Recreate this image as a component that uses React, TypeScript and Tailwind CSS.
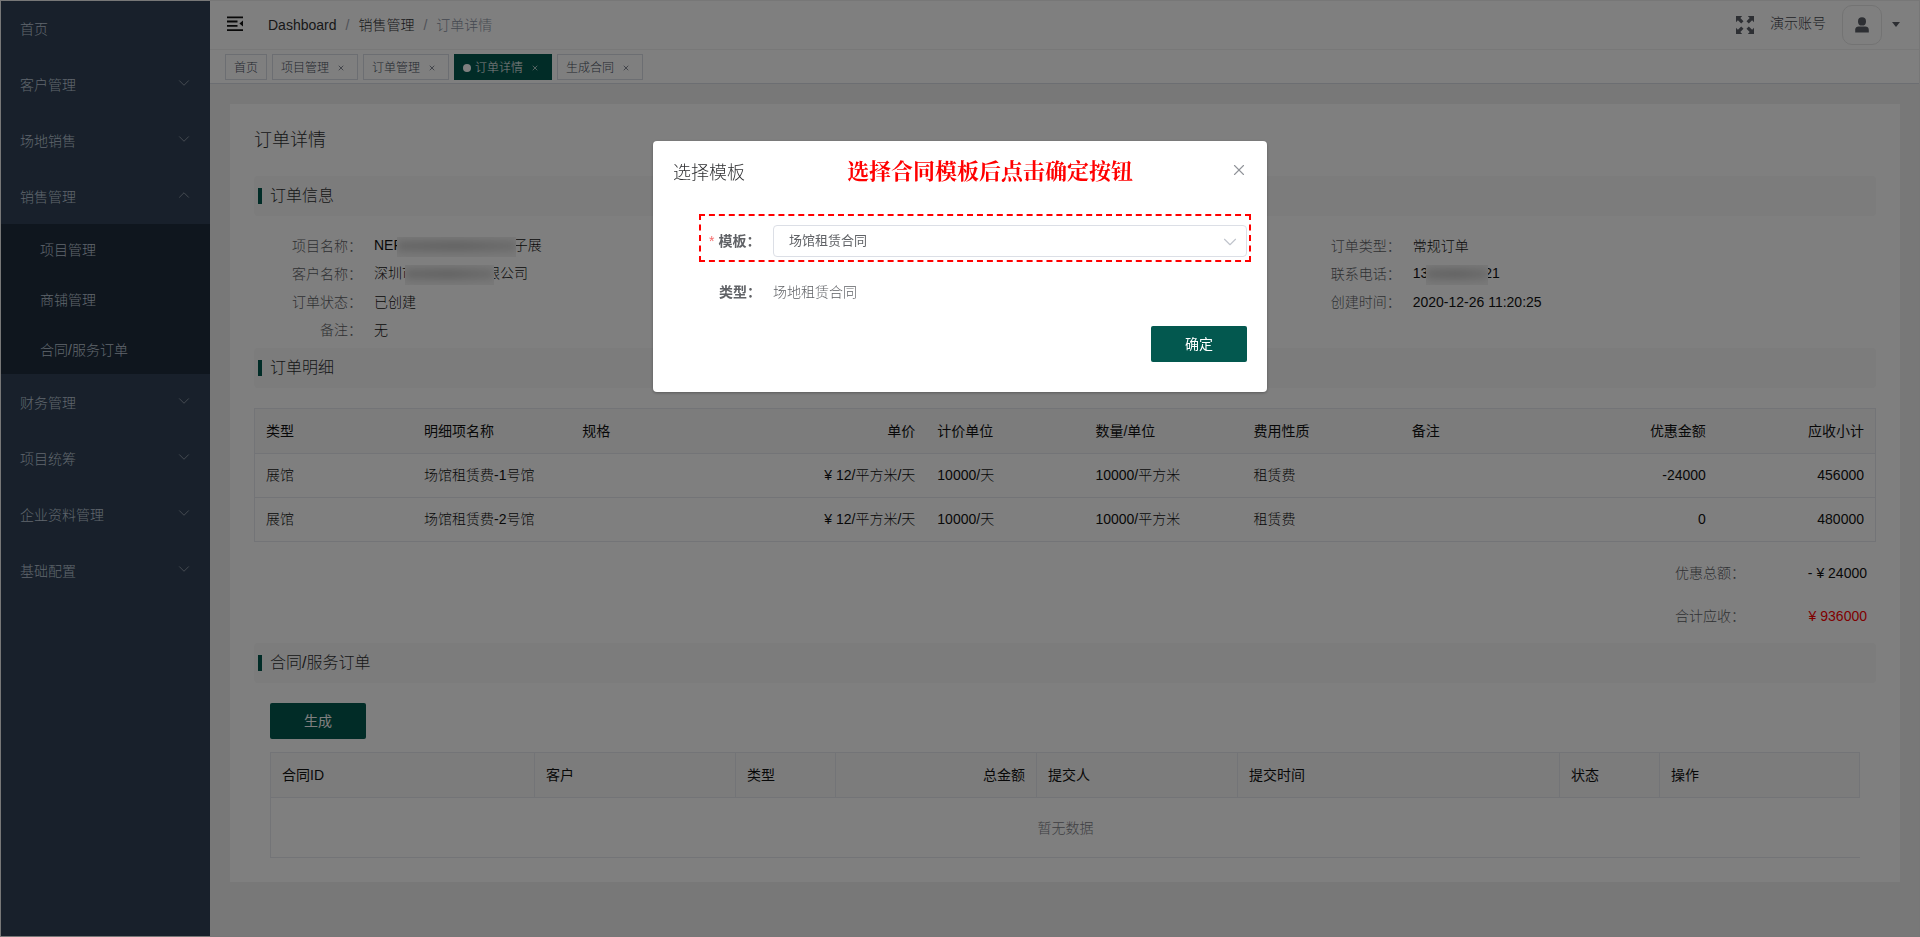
import { useState } from "react";
import type { ReactNode } from "react";
import clsx from "clsx";
import { ChevronDown, ChevronUp, X } from "lucide-react";

interface MenuItem {
  name: string;
  children?: string[];
  leaf?: boolean;
}

interface Tag {
  name: string;
  closable: boolean;
}

interface Column {
  title: string;
  width?: string;
  right?: boolean;
}

const menu: MenuItem[] = [
  { name: "首页", leaf: true },
  { name: "客户管理" },
  { name: "场地销售" },
  { name: "销售管理", children: ["项目管理", "商铺管理", "合同/服务订单"] },
  { name: "财务管理" },
  { name: "项目统筹" },
  { name: "企业资料管理" },
  { name: "基础配置" },
];

const tags: Tag[] = [
  { name: "首页", closable: false },
  { name: "项目管理", closable: true },
  { name: "订单管理", closable: true },
  { name: "订单详情", closable: true },
  { name: "生成合同", closable: true },
];

const detailColumns: Column[] = [
  { title: "类型" },
  { title: "明细项名称" },
  { title: "规格" },
  { title: "单价", width: "w-[197px]", right: true },
  { title: "计价单位" },
  { title: "数量/单位" },
  { title: "费用性质" },
  { title: "备注" },
  { title: "优惠金额", right: true },
  { title: "应收小计", right: true },
];

const detailRows = [
  ["展馆", "场馆租赁费-1号馆", "", "¥ 12/平方米/天", "10000/天", "10000/平方米", "租赁费", "", "-24000", "456000"],
  ["展馆", "场馆租赁费-2号馆", "", "¥ 12/平方米/天", "10000/天", "10000/平方米", "租赁费", "", "0", "480000"],
];

const contractColumns: Column[] = [
  { title: "合同ID" },
  { title: "客户", width: "w-[201px]" },
  { title: "类型", width: "w-[100px]" },
  { title: "总金额", width: "w-[201px]", right: true },
  { title: "提交人", width: "w-[201px]" },
  { title: "提交时间", width: "w-[322px]" },
  { title: "状态", width: "w-[100px]" },
  { title: "操作", width: "w-[200px]" },
];

function FoldIcon() {
  return (
    <svg className="h-4 w-4" viewBox="0 0 16 16" fill="#111" aria-hidden="true">
      <path d="M0 0.5h16v1.8H0zM0 4.6h10.5v1.8H0zM0 8.9h10.5v1.8H0zM0 13.2h16V15H0zM16 4.6v6L12.4 7.6z" />
    </svg>
  );
}

function FullscreenIcon() {
  return (
    <svg className="h-[18px] w-[18px]" viewBox="0 0 18 18" fill="#5a5e66" aria-hidden="true">
      {[0, 90, 180, 270].map((angle) => (
        <path
          key={angle}
          transform={`rotate(${angle} 9 9)`}
          d="M0 0h6.2L4.3 1.9l3.2 3.3-2.3 2.3-3.3-3.2L0 6.2z"
        />
      ))}
    </svg>
  );
}

function UserIcon() {
  return (
    <svg className="h-4 w-4" viewBox="0 0 16 16" fill="#5a5e66" aria-hidden="true">
      <ellipse cx="8" cy="4.4" rx="4" ry="4.2" />
      <path d="M1.2 15.4v-2.6c0-2 1.6-3.2 3.4-3.2h6.8c1.8 0 3.4 1.2 3.4 3.2v2.6z" />
    </svg>
  );
}

// hides the private part of a value behind a smudge
function Masked({ className }: { className: string }) {
  return (
    <span
      className={clsx(
        "relative inline-block h-5 overflow-hidden bg-[#f4f4f4] align-middle",
        className
      )}
    >
      <span className="absolute inset-x-0 top-1 h-2.5 bg-linear-to-r from-[#cacaca] via-[#c0c0c0] to-[#d4d4d4] blur-[4px]" />
    </span>
  );
}

function Field({ label, children }: { label: string; children: ReactNode }) {
  return (
    <div className="flex h-7 items-center">
      <dt className="w-[89px] pr-3 text-right text-[#606266]">{label}：</dt>
      <dd className="whitespace-nowrap text-[#111]">{children}</dd>
    </div>
  );
}

function SectionTitle({ children }: { children: ReactNode }) {
  return (
    <h2 className="flex h-10 items-center gap-2 rounded bg-[#f8f8f8] pl-1 text-base font-light text-[#303133]">
      <span className="h-4 w-1 bg-[#03584f]" />
      {children}
    </h2>
  );
}

function Sidebar() {
  return (
    <nav className="w-[210px] shrink-0 bg-[#304156] text-sm text-[#bfcbd9]">
      <ul>
        {menu.map((item) => (
          <li key={item.name}>
            {item.leaf ? (
              <a href="#" className="flex h-14 items-center px-5 pt-0.5">
                {item.name}
              </a>
            ) : (
              <button
                type="button"
                className="flex h-14 w-full items-center justify-between pl-5 pr-[17px] pt-0.5"
              >
                {item.name}
                <span className="pb-1 text-[#8e99a6]">
                  {item.children ? (
                    <ChevronUp size={18} strokeWidth={1.25} />
                  ) : (
                    <ChevronDown size={18} strokeWidth={1.25} />
                  )}
                </span>
              </button>
            )}
            {item.children && (
              <ul className="bg-[#1f2d3d]">
                {item.children.map((child) => (
                  <li key={child}>
                    <a href="#" className="flex h-[50px] items-center px-10 pt-0.5">
                      {child}
                    </a>
                  </li>
                ))}
              </ul>
            )}
          </li>
        ))}
      </ul>
    </nav>
  );
}

function Navbar() {
  return (
    <header className="flex h-[50px] items-center justify-between border-b border-[#f0f0f0] pl-[17px] pr-5 text-sm">
      <div className="flex items-center">
        <button type="button" aria-label="收起菜单" className="pb-0.5">
          <FoldIcon />
        </button>
        <ol className="ml-[25px] flex gap-[9px] text-[#303133]">
          <li>
            <a href="#">Dashboard</a>
          </li>
          <li className="text-[#a0a4b0]">/</li>
          <li>
            <a href="#">销售管理</a>
          </li>
          <li className="text-[#a0a4b0]">/</li>
          <li className="text-[#8c93a3]">订单详情</li>
        </ol>
      </div>
      <div className="flex items-center text-[#43464d]">
        <button type="button" aria-label="全屏">
          <FullscreenIcon />
        </button>
        <span className="ml-4 pb-1">演示账号</span>
        <button type="button" aria-label="账号菜单" className="ml-4 flex items-center gap-2.5">
          <span className="flex h-10 w-10 items-center justify-center rounded-[10px] border border-[#e6e6e6]">
            <UserIcon />
          </span>
          <span className="border-x-4 border-t-[5px] border-x-transparent border-t-[#5a5e66]" />
        </button>
      </div>
    </header>
  );
}

function TagsView() {
  return (
    <div className="flex h-[34px] items-center gap-[5px] border-b border-[#d8dce5] pl-[15px] pt-px text-xs">
      {tags.map((tag) => {
        const active = tag.name === "订单详情";
        return (
          <a
            key={tag.name}
            href="#"
            className={clsx(
              "flex h-[26px] items-center border px-2 pt-0.5",
              active
                ? "border-[#03584f] bg-[#03584f] text-white"
                : "border-[#d8dce5] text-[#495060]"
            )}
          >
            {active && <span className="mr-1 h-2 w-2 rounded-full bg-white" />}
            {tag.name}
            {tag.closable && (
              <span className="ml-1 flex h-4 w-4 items-center justify-center">
                <X size={8} strokeWidth={2} />
              </span>
            )}
          </a>
        );
      })}
    </div>
  );
}

function OrderInfo() {
  return (
    <dl className="grid grid-cols-3 pb-1 pl-[31px] pr-[33px] pt-4 text-sm">
      <div>
        <Field label="项目名称">
          NEP
          <Masked className="-ml-1.5 -mr-0.5 w-[119px]" />
          子展
        </Field>
        <Field label="客户名称">
          深圳市
          <Masked className="-ml-[11px] -mr-2 w-[89px]" />
          限公司
        </Field>
        <Field label="订单状态">已创建</Field>
        <Field label="备注">无</Field>
      </div>
      <div className="col-start-3">
        <Field label="订单类型">常规订单</Field>
        <Field label="联系电话">
          13
          <Masked className="-ml-0.5 -mr-1 w-[62px]" />
          21
        </Field>
        <Field label="创建时间">2020-12-26 11:20:25</Field>
      </div>
    </dl>
  );
}

function DetailTable() {
  return (
    <table className="mt-5 w-full table-fixed border-separate border-spacing-0 border-x border-t border-[#e6e8ee] text-left text-sm">
      <thead>
        <tr>
          {detailColumns.map((col) => (
            <th
              key={col.title}
              className={clsx(
                "h-[45px] border-b border-[#e6e8ee] bg-[#f9f9f9] px-[11px] font-normal text-[#111]",
                col.width,
                col.right && "text-right"
              )}
            >
              {col.title}
            </th>
          ))}
        </tr>
      </thead>
      <tbody>
        {detailRows.map((row) => (
          <tr key={row[1]}>
            {row.map((cell, i) => (
              <td
                key={i}
                className={clsx(
                  "h-11 border-b border-[#e6e8ee] px-[11px] pb-0.5 text-[#111]",
                  detailColumns[i].right && "text-right"
                )}
              >
                {cell}
              </td>
            ))}
          </tr>
        ))}
      </tbody>
    </table>
  );
}

function Totals() {
  return (
    <dl className="flex flex-col items-end pb-1.5 pr-[9px] pt-[9px] text-sm text-[#111]">
      <div className="flex h-[43px] items-center">
        <dt className="text-[#606266]">优惠总额：</dt>
        <dd className="w-[122px] text-right">- ¥ 24000</dd>
      </div>
      <div className="flex h-[43px] items-center">
        <dt className="text-[#606266]">合计应收：</dt>
        <dd className="w-[122px] text-right text-[#ff0000]">¥ 936000</dd>
      </div>
    </dl>
  );
}

function ContractTable() {
  return (
    <table className="mt-[13px] w-full table-fixed border-separate border-spacing-0 border-l border-t border-[#e6e8ee] text-left text-sm">
      <thead>
        <tr>
          {contractColumns.map((col) => (
            <th
              key={col.title}
              className={clsx(
                "h-[45px] border-b border-r border-[#e6e8ee] bg-[#f9f9f9] px-[11px] font-normal text-[#111]",
                col.width,
                col.right && "text-right"
              )}
            >
              {col.title}
            </th>
          ))}
        </tr>
      </thead>
      <tbody>
        <tr>
          <td
            colSpan={contractColumns.length}
            className="h-[60px] border-b border-[#e6e8ee] text-center text-[#7d8085]"
          >
            暂无数据
          </td>
        </tr>
      </tbody>
    </table>
  );
}

function TemplateDialog() {
  const [template, setTemplate] = useState("场馆租赁合同");

  return (
    <div className="fixed inset-0 flex items-start justify-center border border-[#777] bg-black/50 pt-[140px]">
      <form
        role="dialog"
        aria-labelledby="dialog-title"
        className="relative w-[614px] rounded-sm bg-white pb-[30px] shadow-[0_1px_3px_rgba(0,0,0,0.3)]"
        onSubmit={(e) => e.preventDefault()}
      >
        <div className="flex h-[62px] items-center justify-between pl-5 pr-[19px]">
          <h2 id="dialog-title" className="pt-0.5 text-lg text-[#303133]">
            选择模板
          </h2>
          <button type="button" aria-label="关闭" className="pb-1 text-[#909399]">
            <X size={18} strokeWidth={1.5} />
          </button>
        </div>
        <p className="absolute left-[194px] top-[13px] font-['Noto_Serif_CJK_SC','Noto_Sans_CJK_SC',serif] text-[22px] font-bold leading-8 text-[#ff0000]">
          选择合同模板后点击确定按钮
        </p>

        <div className="relative mt-[11px] h-12 text-sm text-[#606266]">
          <div className="absolute inset-y-0 left-[46px] right-4 border-2 border-dashed border-[#ff0000]" />
          <div className="relative flex h-full items-center pl-[56px] pr-5 pt-1.5">
            <label htmlFor="template" className="w-16 whitespace-nowrap font-bold">
              <span className="mr-1 font-normal text-[#f56c6c]">*</span>
              模板：
            </label>
            <div className="relative flex-1">
              <select
                id="template"
                value={template}
                onChange={(e) => setTemplate(e.target.value)}
                className="h-8 w-full appearance-none rounded border border-[#dcdfe6] bg-white px-[15px] text-[13px] font-normal text-[#606266]"
              >
                <option>场馆租赁合同</option>
              </select>
              <ChevronDown
                size={22}
                strokeWidth={1.25}
                className="pointer-events-none absolute right-1.5 top-1.5 text-[#c0c4cc]"
              />
            </div>
          </div>
        </div>

        <div className="mt-3.5 flex h-8 items-center pl-[66px] text-sm text-[#606266]">
          <span className="w-[54px] whitespace-nowrap font-bold">类型：</span>
          <span>场地租赁合同</span>
        </div>

        <div className="mt-[18px] flex justify-end pr-5">
          <button
            type="submit"
            className="h-9 w-24 rounded-xs bg-[#03584f] text-sm font-normal text-white"
          >
            确定
          </button>
        </div>
      </form>
    </div>
  );
}

function App() {
  return (
    <div
      lang="zh-CN"
      className="flex min-h-screen bg-[#f0f0f0] font-['Liberation_Sans','Noto_Sans_CJK_SC',sans-serif] font-light"
    >
      <Sidebar />
      <div className="min-w-0 flex-1">
        <div className="bg-white">
          <Navbar />
          <TagsView />
        </div>
        <main className="m-5 bg-white px-6 pb-6 pt-5">
          <h1 className="mb-[19px] text-lg font-light leading-[33px] text-[#303133]">订单详情</h1>

          <SectionTitle>订单信息</SectionTitle>
          <OrderInfo />

          <SectionTitle>订单明细</SectionTitle>
          <DetailTable />
          <Totals />

          <SectionTitle>合同/服务订单</SectionTitle>
          <div className="px-4 pt-5">
            <button
              type="button"
              className="h-9 w-24 rounded-xs bg-[#03584f] text-sm font-normal text-white"
            >
              生成
            </button>
            <ContractTable />
          </div>
        </main>
      </div>
      <TemplateDialog />
    </div>
  );
}

export default App;
